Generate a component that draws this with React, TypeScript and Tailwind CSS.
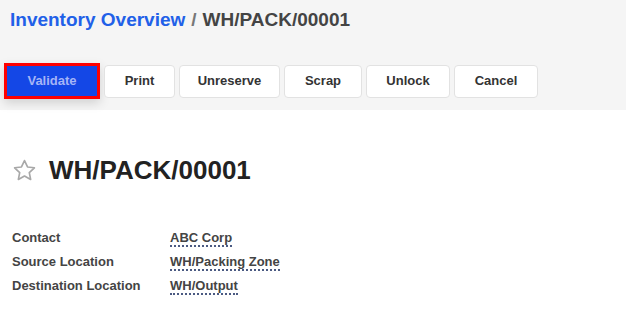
import React from 'react';

const buttons = [
  { label: 'Print', w: 'w-[71px]' },
  { label: 'Unreserve', w: 'w-[101px]' },
  { label: 'Scrap', w: 'w-[78px]' },
  { label: 'Unlock', w: 'w-[84px]' },
  { label: 'Cancel', w: 'w-[84px]' },
];

const fields = [
  { label: 'Contact', value: 'ABC Corp' },
  { label: 'Source Location', value: 'WH/Packing Zone' },
  { label: 'Destination Location', value: 'WH/Output' },
];

const App: React.FC = () => {
  return (
    <div className="w-[626px] h-[313px] overflow-hidden bg-white font-['Liberation_Sans',Arial,sans-serif]">
      {/* Control panel */}
      <div className="h-[110px] bg-[#f5f5f5] pt-[8px]">
        <div className="flex items-center px-[10px] h-[24px] text-[19px] font-bold leading-[24px]">
          <span className="text-[#2160e8]">Inventory Overview</span>
          <span className="text-[#777] ml-[6px]">/</span>
          <span className="text-[#444] ml-[6px]">WH/PACK/00001</span>
        </div>
        <div className="flex items-center gap-[4px] mt-[31px] pl-[4px] h-[36px]">
          <button className="w-[96px] h-[36px] bg-[#1447e6] border-[3px] border-[#ff0000] text-[#a6b4f6] text-[13px] font-bold shadow-[0_4px_10px_rgba(0,0,0,0.15)]">
            Validate
          </button>
          {buttons.map((b) => (
            <button
              key={b.label}
              className={`${b.w} h-[33px] bg-white border border-[#e2e2e2] rounded-[4px] text-[#333] text-[13px] font-bold`}
            >
              {b.label}
            </button>
          ))}
        </div>
      </div>

      {/* Form sheet */}
      <div className="px-[12px]">
        <div className="flex items-center gap-[12px] mt-[45px] h-[30px]">
          <svg width="25" height="25" viewBox="0 0 24 24" fill="none" stroke="#a8a8a8" strokeWidth="1.6" strokeLinejoin="round">
            <path d="M12 2.5l2.9 6.1 6.6.8-4.9 4.6 1.3 6.6L12 17.3l-5.9 3.3 1.3-6.6-4.9-4.6 6.6-.8z" />
          </svg>
          <h1 className="text-[26px] font-bold text-[#222] leading-[30px]">WH/PACK/00001</h1>
        </div>

        <div className="mt-[41px] flex flex-col">
          {fields.map((f) => (
            <div key={f.label} className="flex items-center h-[24px] text-[13px] font-bold">
              <span className="w-[158px] text-[#444]">{f.label}</span>
              <span className="text-[#444] leading-[15px] border-b-2 border-dotted border-[#4b5a82]">{f.value}</span>
            </div>
          ))}
        </div>
      </div>
    </div>
  );
};

export default App;
